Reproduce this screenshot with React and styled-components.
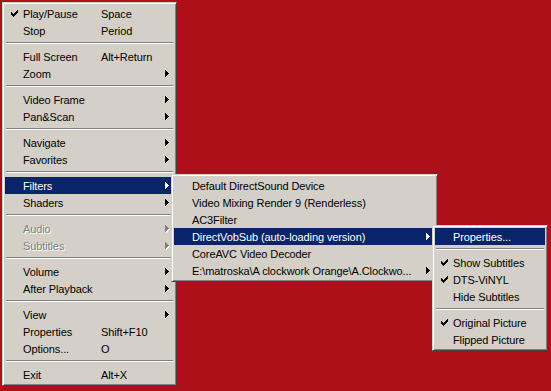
import styled, { createGlobalStyle } from "styled-components";

const GlobalStyle = createGlobalStyle`
  html, body {
    margin: 0;
    padding: 0;
    background: #ae1019;
  }
  body {
    font-family: "Liberation Sans", Arial, sans-serif;
  }
`;

const mainItems = [
  { label: "Play/Pause", key: "Space", checked: true },
  { label: "Stop", key: "Period" },
  { sep: true },
  { label: "Full Screen", key: "Alt+Return" },
  { label: "Zoom", sub: true },
  { sep: true },
  { label: "Video Frame", sub: true },
  { label: "Pan&Scan", sub: true },
  { sep: true },
  { label: "Navigate", sub: true },
  { label: "Favorites", sub: true },
  { sep: true },
  { label: "Filters", sub: true, active: true },
  { label: "Shaders", sub: true },
  { sep: true },
  { label: "Audio", sub: true, disabled: true },
  { label: "Subtitles", sub: true, disabled: true },
  { sep: true },
  { label: "Volume", sub: true },
  { label: "After Playback", sub: true },
  { sep: true },
  { label: "View", sub: true },
  { label: "Properties", key: "Shift+F10" },
  { label: "Options...", key: "O" },
  { sep: true },
  { label: "Exit", key: "Alt+X" },
];

const filterItems = [
  { label: "Default DirectSound Device" },
  { label: "Video Mixing Render 9 (Renderless)" },
  { label: "AC3Filter" },
  { label: "DirectVobSub (auto-loading version)", sub: true, active: true },
  { label: "CoreAVC Video Decoder" },
  { label: "E:\\matroska\\A clockwork Orange\\A.Clockwo...", sub: true },
];

const vobsubItems = [
  { label: "Properties...", active: true },
  { sep: true },
  { label: "Show Subtitles", checked: true },
  { label: "DTS-ViNYL", checked: true },
  { label: "Hide Subtitles" },
  { sep: true },
  { label: "Original Picture", checked: true },
  { label: "Flipped Picture" },
];

// classic 7x7 menu check bitmap
const checkRows = [
  "......X",
  ".....XX",
  "X...XXX",
  "XX.XXX.",
  "XXXXX..",
  ".XXX...",
  "..X....",
];

function CheckMark() {
  const cells = [];
  checkRows.forEach((row, y) => {
    row.split("").forEach((c, x) => {
      if (c === "X") cells.push(<rect key={x + "-" + y} x={x} y={y} width="1" height="1" />);
    });
  });
  return (
    <svg width="7" height="7" viewBox="0 0 7 7" fill="currentColor" shapeRendering="crispEdges">
      {cells}
    </svg>
  );
}

function SubArrow() {
  return (
    <svg width="4" height="7" viewBox="0 0 4 7" fill="currentColor" shapeRendering="crispEdges">
      <rect x="0" y="0" width="1" height="7" />
      <rect x="1" y="1" width="1" height="5" />
      <rect x="2" y="2" width="1" height="3" />
      <rect x="3" y="3" width="1" height="1" />
    </svg>
  );
}

function PopupMenu({ items, left, top, width, labelWidth }) {
  return (
    <Menu $left={left} $top={top} $width={width}>
      {items.map((it, i) =>
        it.sep ? (
          <Separator key={i} />
        ) : (
          <Item key={i} $active={it.active} $disabled={it.disabled}>
            <Check>{it.checked ? <CheckMark /> : null}</Check>
            <Label $w={labelWidth}>{it.label}</Label>
            {it.key ? <Shortcut>{it.key}</Shortcut> : null}
            {it.sub ? (
              <Arrow $disabled={it.disabled}>
                <SubArrow />
              </Arrow>
            ) : null}
          </Item>
        )
      )}
    </Menu>
  );
}

export default function App() {
  return (
    <>
      <GlobalStyle />
      <Desktop>
        <PopupMenu items={mainItems} left={2} top={2} width={175} labelWidth={78} />
        <PopupMenu items={filterItems} left={171} top={174} width={267} />
        <PopupMenu items={vobsubItems} left={432} top={225} width={116} />
      </Desktop>
    </>
  );
}

const Desktop = styled.div`
  position: relative;
  width: 551px;
  height: 391px;
  background: #ae1019;
  overflow: hidden;
`;

const Menu = styled.div`
  position: absolute;
  left: ${(p) => p.$left}px;
  top: ${(p) => p.$top}px;
  width: ${(p) => p.$width}px;
  box-sizing: border-box;
  background: #d4d0c8;
  border: 1px solid;
  border-color: #d4d0c8 #404040 #404040 #d4d0c8;
  box-shadow: inset 1px 1px #ffffff, inset -1px -1px #808080;
  padding: 2px;
  display: flex;
  flex-direction: column;
`;

const Item = styled.div`
  display: flex;
  align-items: center;
  height: 17px;
  font-size: 11px;
  line-height: 18px;
  letter-spacing: -0.1px;
  white-space: nowrap;
  color: ${(p) => (p.$active ? "#ffffff" : p.$disabled ? "#808080" : "#000000")};
  background: ${(p) => (p.$active ? "#0a246a" : "transparent")};
  text-shadow: ${(p) => (p.$disabled ? "1px 1px 0 #ffffff" : "none")};
`;

const Check = styled.span`
  width: 18px;
  flex: none;
  display: flex;
  justify-content: center;
  align-items: center;
`;

const Label = styled.span`
  width: ${(p) => (p.$w ? p.$w + "px" : "auto")};
  flex: none;
`;

const Shortcut = styled.span`
  flex: none;
`;

const Arrow = styled.span`
  margin-left: auto;
  margin-right: 5px;
  display: flex;
  filter: ${(p) => (p.$disabled ? "drop-shadow(1px 1px 0 #ffffff)" : "none")};
`;

const Separator = styled.div`
  height: 9px;
  margin: 0 1px;
  &::before {
    content: "";
    display: block;
    margin-top: 3px;
    height: 1px;
    background: #808080;
    border-bottom: 1px solid #ffffff;
  }
`;
